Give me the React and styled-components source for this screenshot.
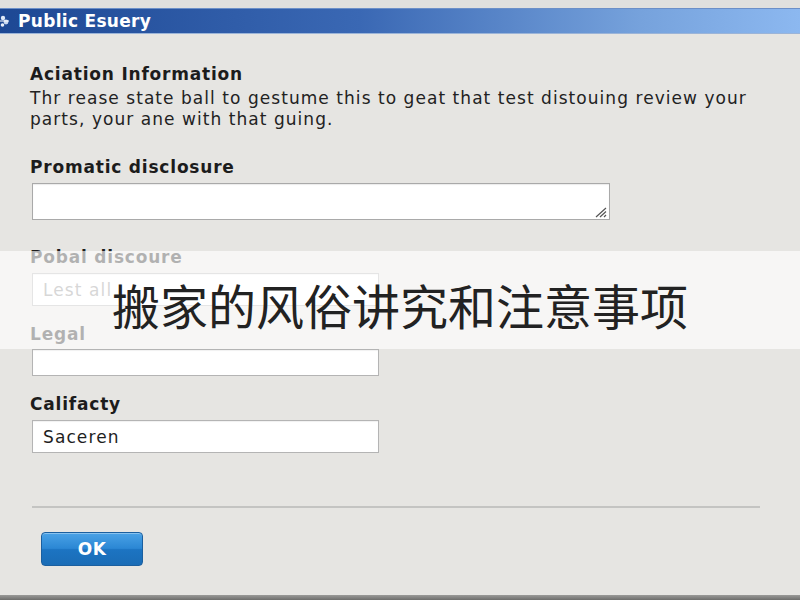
import React from 'react';
import styled, { createGlobalStyle } from 'styled-components';

const GlobalStyle = createGlobalStyle`
  html, body {
    margin: 0;
    padding: 0;
    background: #e0e0de;
  }
  body {
    font-family: "DejaVu Sans", Verdana, sans-serif;
  }
`;

const Window = styled.div`
  position: relative;
  width: 800px;
  height: 600px;
  box-sizing: border-box;
  padding-top: 8px;
  background: #e0e0de;
  overflow: hidden;
  display: flex;
  flex-direction: column;
`;

const TitleBar = styled.div`
  height: 24px;
  display: flex;
  align-items: center;
  gap: 6px;
  background: linear-gradient(to right, #1d4894 0%, #3a68b4 45%, #76a2dc 80%, #8cb8f0 100%);
  border-top: 1px solid #6b8fc8;
  border-bottom: 1px solid #9bb4d8;
`;

const TitleText = styled.span`
  color: #ffffff;
  font-weight: bold;
  font-size: 17px;
  letter-spacing: 0.3px;
`;

const Body = styled.div`
  flex: 1;
  background: #e6e5e2;
  padding: 30px 40px 0 30px;
  display: flex;
  flex-direction: column;
`;

const SectionTitle = styled.h2`
  margin: 0;
  font-size: 17px;
  font-weight: bold;
  letter-spacing: 0.8px;
  color: #1c1c1c;
  line-height: 20px;
`;

const Paragraph = styled.p`
  margin: 4px 0 0;
  font-size: 17px;
  letter-spacing: 1.05px;
  line-height: 21px;
  color: #222;
`;

const Label = styled.label`
  display: block;
  font-size: 17px;
  font-weight: bold;
  letter-spacing: 0.8px;
  color: #1c1c1c;
  line-height: 20px;
  margin-top: ${p => p.top}px;
`;

const TextArea = styled.div`
  position: relative;
  margin-top: 6px;
  margin-left: 2px;
  width: 578px;
  height: 37px;
  box-sizing: border-box;
  background: #fff;
  border: 1px solid #a9a9a9;
  box-shadow: inset 0 1px 1px rgba(0,0,0,0.08);
`;

const Grip = styled.svg`
  position: absolute;
  right: 1px;
  bottom: 1px;
`;

const Input = styled.div`
  margin-top: ${p => p.top}px;
  margin-left: 2px;
  width: 347px;
  height: ${p => p.h}px;
  box-sizing: border-box;
  background: #fff;
  border: 1px solid #b4b4b4;
  box-shadow: inset 0 1px 1px rgba(0,0,0,0.06);
  display: flex;
  align-items: center;
  padding-left: 10px;
  font-size: 17px;
  letter-spacing: 1.1px;
  color: ${p => (p.placeholder ? '#8a8a8a' : '#1e1e1e')};
`;

const Divider = styled.hr`
  margin: 53px 0 0 2px;
  width: 728px;
  border: none;
  border-top: 2px solid #c4c4c2;
`;

const OkButton = styled.button`
  margin: 24px 0 0 11px;
  width: 102px;
  height: 34px;
  border-radius: 4px;
  border: 1px solid #1b5f9f;
  background: linear-gradient(to bottom, #4aa2e6 0%, #2b87d4 48%, #1c74c2 52%, #1a6cb6 100%);
  color: #fff;
  font-family: "DejaVu Sans", Verdana, sans-serif;
  font-weight: bold;
  font-size: 17px;
  letter-spacing: 0.5px;
  box-shadow: inset 0 1px 0 rgba(255,255,255,0.35);
`;

const BottomEdge = styled.div`
  height: 5px;
  background: linear-gradient(to bottom, #9a9a98, #6e6e6c);
`;

const Banner = styled.div`
  position: absolute;
  left: 0;
  right: 0;
  top: 251px;
  height: 98px;
  box-sizing: border-box;
  padding-top: 8px;
  background: rgba(255, 255, 255, 0.66);
  display: flex;
  align-items: center;
  justify-content: center;
  font-family: "Noto Sans CJK SC", sans-serif;
  font-size: 48px;
  color: #222;
`;

function AppIcon() {
  return (
    <svg width="12" height="16" viewBox="0 0 12 16">
      <circle cx="3" cy="5" r="2.2" fill="#dfe9f7" />
      <circle cx="6" cy="9" r="2.4" fill="#c9d9f0" />
      <circle cx="2.5" cy="12" r="1.8" fill="#e8eef8" />
      <path d="M0 8 L9 8" stroke="#ffffff" strokeWidth="1" />
    </svg>
  );
}

export default function App() {
  return (
    <>
      <GlobalStyle />
      <Window>
        <TitleBar>
          <AppIcon />
          <TitleText>Public Esuery</TitleText>
        </TitleBar>
        <Body>
          <SectionTitle>Aciation Information</SectionTitle>
          <Paragraph>
            Thr rease state ball to gestume this to geat that test distouing review your parts, your ane with that guing.
          </Paragraph>
          <Label top={27}>Promatic disclosure</Label>
          <TextArea>
            <Grip width="14" height="12" viewBox="0 0 14 12">
              <path d="M2 11 L12 2 M6 11 L12 5.5 M10 11 L12 9" stroke="#555" strokeWidth="1.2" />
            </Grip>
          </TextArea>
          <Label top={27}>Pobal discoure</Label>
          <Input top={6} h={33} placeholder>Lest all</Input>
          <Label top={18}>Legal</Label>
          <Input top={5} h={27} />
          <Label top={18}>Califacty</Label>
          <Input top={6} h={33}>Saceren</Input>
          <Divider />
          <OkButton>OK</OkButton>
        </Body>
        <BottomEdge />
        <Banner>搬家的风俗讲究和注意事项</Banner>
      </Window>
    </>
  );
}
